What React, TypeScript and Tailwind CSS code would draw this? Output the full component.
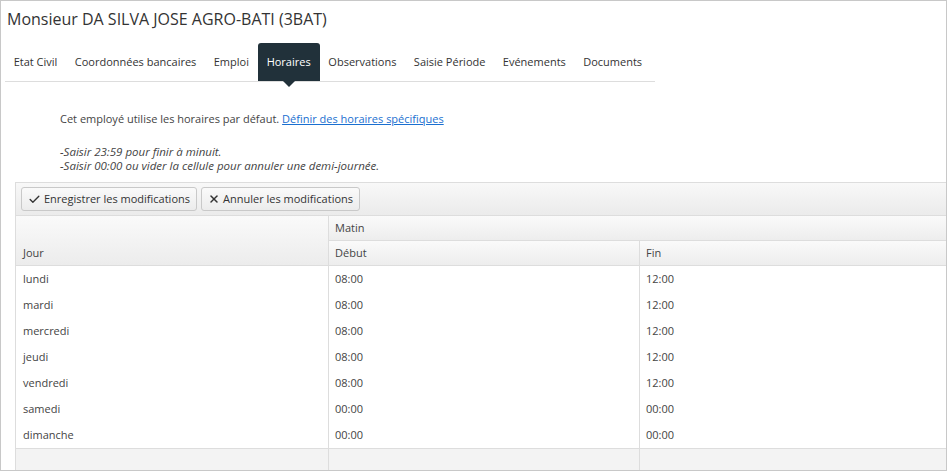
import { Check, X } from "lucide-react"

const tabs = ["Etat Civil", "Coordonnées bancaires", "Emploi", "Horaires", "Observations", "Saisie Période", "Evénements", "Documents"]

const rows = [
  { day: "lundi", start: "08:00", end: "12:00" },
  { day: "mardi", start: "08:00", end: "12:00" },
  { day: "mercredi", start: "08:00", end: "12:00" },
  { day: "jeudi", start: "08:00", end: "12:00" },
  { day: "vendredi", start: "08:00", end: "12:00" },
  { day: "samedi", start: "00:00", end: "00:00" },
  { day: "dimanche", start: "00:00", end: "00:00" },
]

export default function App() {
  return (
    <div className="w-[947px] h-[471px] border border-[#c8c8c8] bg-white overflow-hidden text-[#333] font-['Open_Sans',sans-serif]">
      <div className="pl-[6px] pt-[6px] text-[16px] leading-[24px] text-[#333]">Monsieur DA SILVA JOSE AGRO-BATI (3BAT)</div>

      <div className="ml-[4px] mt-[12px] w-[650px] flex border-b border-[#ddd] h-[39px] items-stretch">
        {tabs.map((t) => (
          <div
            key={t}
            className={
              t === "Horaires"
                ? "relative px-[9px] flex items-center whitespace-nowrap text-[11px] bg-[#21313a] text-white rounded-t-[3px]"
                : "px-[8.7px] flex items-center whitespace-nowrap text-[11px] text-[#333]"
            }
          >
            {t}
            {t === "Horaires" && (
              <span className="absolute left-1/2 -translate-x-1/2 top-full w-0 h-0 border-l-[6px] border-r-[6px] border-t-[6px] border-l-transparent border-r-transparent border-t-[#21313a]" />
            )}
          </div>
        ))}
      </div>

      <div className="pl-[59px] pt-[28px] text-[11px] text-[#444]">
        <div className="leading-[18px]">
          Cet employé utilise les horaires par défaut.{" "}
          <a className="text-[#1a6fd0] underline">Définir des horaires spécifiques</a>
        </div>
        <div className="mt-[17px] italic text-[11.5px] leading-[14px]">
          <div>-Saisir 23:59 pour finir à minuit.</div>
          <div>-Saisir 00:00 ou vider la cellule pour annuler une demi-journée.</div>
        </div>
      </div>

      <div className="ml-[14px] mt-[9px] w-[950px] border-t border-l border-[#ddd]">
        <div className="h-[33px] flex items-center gap-[4px] pl-[5px] bg-gradient-to-b from-[#f8f8f8] to-[#ebebeb] border-b border-[#ddd]">
          <button className="h-[24px] px-[6px] flex items-center gap-[3px] text-[11px] text-[#333] border border-[#c9c9c9] rounded-[3px] bg-gradient-to-b from-[#fafafa] to-[#ececec]">
            <Check size={13} strokeWidth={2.5} />
            Enregistrer les modifications
          </button>
          <button className="h-[24px] px-[6px] flex items-center gap-[3px] text-[11px] text-[#333] border border-[#c9c9c9] rounded-[3px] bg-gradient-to-b from-[#fafafa] to-[#ececec]">
            <X size={12} strokeWidth={3} />
            Annuler les modifications
          </button>
        </div>

        <div className="grid grid-cols-[312px_311px_1fr] text-[11px] text-[#444]">
          <div className="row-span-2 flex items-end pl-[7px] pb-[4px] bg-gradient-to-b from-[#fafafa] to-[#ececec] border-b border-[#ddd]">Jour</div>
          <div className="col-span-2 h-[25px] flex items-center pl-[6px] bg-gradient-to-b from-[#fafafa] to-[#ededed] border-l border-b border-[#ddd]">Matin</div>
          <div className="h-[25px] flex items-center pl-[6px] bg-gradient-to-b from-[#fafafa] to-[#ededed] border-l border-b border-[#ddd]">Début</div>
          <div className="h-[25px] flex items-center pl-[6px] bg-gradient-to-b from-[#fafafa] to-[#ededed] border-l border-b border-[#ddd]">Fin</div>

          {rows.map((r) => (
            <div key={r.day} className="contents">
              <div className="h-[26px] flex items-center pl-[7px]">{r.day}</div>
              <div className="h-[26px] flex items-center pl-[6px] border-l border-[#ddd]">{r.start}</div>
              <div className="h-[26px] flex items-center pl-[6px] border-l border-[#ddd]">{r.end}</div>
            </div>
          ))}

          <div className="h-[24px] bg-[#f3f3f3] border-t border-[#ddd]" />
          <div className="h-[24px] bg-[#f3f3f3] border-t border-l border-[#ddd]" />
          <div className="h-[24px] bg-[#f3f3f3] border-t border-l border-[#ddd]" />
        </div>
      </div>
    </div>
  )
}
